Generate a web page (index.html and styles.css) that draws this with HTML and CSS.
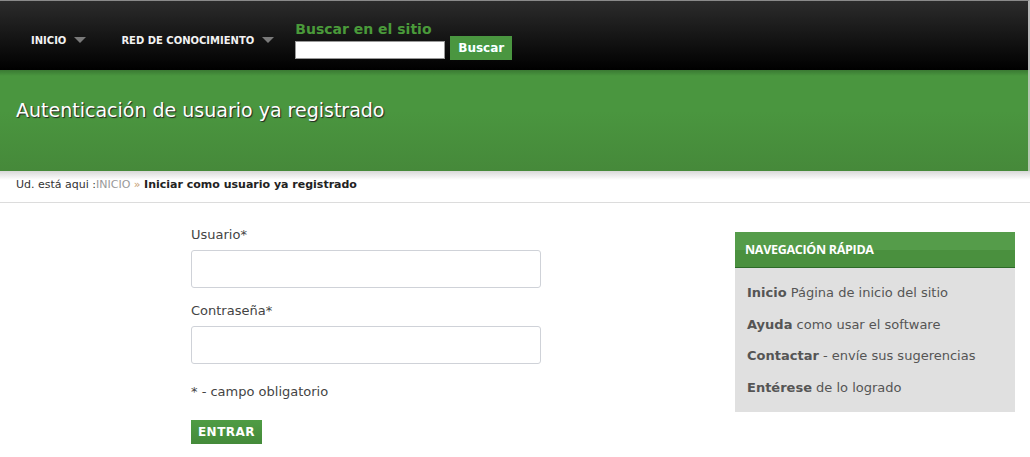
FILE: index.html
```html
<!DOCTYPE html>
<html lang="es">
<head>
<meta charset="utf-8">
<title>Autenticación de usuario ya registrado</title>
<link rel="stylesheet" href="styles.css">
</head>
<body>
<header class="topbar">
  <nav class="mainnav">
    <a class="navitem" href="#">INICIO <span class="caret"></span></a>
    <a class="navitem" href="#">RED DE CONOCIMIENTO <span class="caret"></span></a>
  </nav>
  <form class="search">
    <label class="search-title">Buscar en el sitio</label>
    <div class="search-row">
      <input class="search-input" type="text">
      <button class="search-btn" type="button">Buscar</button>
    </div>
  </form>
</header>
<section class="band">
  <h1 class="band-title">Autenticación de usuario ya registrado</h1>
</section>
<div class="band-shadow"></div>
<div class="crumbs">
  <span class="crumb-lead">Ud. está aqui :</span><a class="crumb-link" href="#">INICIO</a> <span class="crumb-sep">»</span> <strong class="crumb-cur">Iniciar como usuario ya registrado</strong>
</div>
<main class="main">
  <form class="login">
    <label class="field-label">Usuario*</label>
    <input class="field" type="text">
    <label class="field-label">Contraseña*</label>
    <input class="field" type="password">
    <p class="note">* - campo obligatorio</p>
    <button class="enter" type="button">ENTRAR</button>
  </form>
  <aside class="quick">
    <h2 class="quick-head">NAVEGACIÓN RÁPIDA</h2>
    <ul class="quick-list">
      <li><b>Inicio</b> Página de inicio del sitio</li>
      <li><b>Ayuda</b> como usar el software</li>
      <li><b>Contactar</b> - envíe sus sugerencias</li>
      <li><b>Entérese</b> de lo logrado</li>
    </ul>
  </aside>
</main>
</body>
</html>
```
FILE: styles.css
```css
html, body {
  margin: 0;
  padding: 0;
  background: #fff;
  font-family: "DejaVu Sans", Verdana, sans-serif;
}
.topbar {
  height: 70px;
  box-sizing: border-box;
  border-top: 1px solid #8a8a8a;
  border-right: 2px solid #b8b8b8;
  background: linear-gradient(#2c2c2c, #000);
  display: flex;
  align-items: flex-start;
}
.mainnav {
  display: flex;
  gap: 35px;
  padding-left: 31px;
  padding-top: 32px;
}
.navitem {
  color: #f2f2f2;
  text-decoration: none;
  font-size: 10px;
  font-weight: bold;
  letter-spacing: 0;
  display: flex;
  align-items: center;
  gap: 8px;
  height: 14px;
}
.caret {
  width: 0;
  height: 0;
  border-left: 6px solid transparent;
  border-right: 6px solid transparent;
  border-top: 6px solid #7a7a7a;
  margin-top: -1px;
}
.search {
  margin: 0 0 0 21px;
  padding-top: 20px;
}
.search-title {
  display: block;
  color: #4a9a3a;
  font-weight: bold;
  font-size: 14px;
  line-height: 16px;
}
.search-row {
  display: flex;
  align-items: center;
  gap: 5px;
  margin-top: -1px;
}
.search-input {
  width: 150px;
  height: 18px;
  box-sizing: border-box;
  border: 1px solid #999;
  background: #fff;
  margin: 4px 0 0;
  padding: 0;
}
.search-btn {
  background: #4a9640;
  color: #fff;
  border: 0;
  font-family: inherit;
  font-weight: bold;
  font-size: 12px;
  height: 24px;
  width: 62px;
  padding: 0;
  margin-top: 0;
  text-shadow: 0 0 1px #2a6;
}
.band {
  height: 101px;
  box-sizing: border-box;
  border-right: 2px solid #b8c8b4;
  background: linear-gradient(#3a7a33 0, #4a963f 6px, #4a963f 40%, #46893a 100%);
  padding: 29px 0 0 16px;
}
.band-title {
  margin: 0;
  color: #fff;
  font-weight: normal;
  font-size: 19px;
  line-height: 22px;
  text-shadow: 1px 1px 1px #222;
}
.band-shadow {
  height: 9px;
  background: linear-gradient(#d8d8d8, #fff);
}
.crumbs {
  padding: 0 0 0 16px;
  height: 22px;
  line-height: 10px;
  font-size: 11px;
  color: #333;
  border-bottom: 1px solid #dcdcdc;
}
.crumb-link {
  color: #999;
  text-decoration: none;
}
.crumb-sep {
  color: #c8a070;
}
.crumb-cur {
  color: #222;
}
.main {
  display: flex;
  align-items: flex-start;
  padding: 0 15px 0 191px;
}
.login {
  width: 350px;
  display: flex;
  flex-direction: column;
  align-items: flex-start;
  padding-top: 24px;
}
.field-label {
  font-size: 13px;
  color: #444;
  line-height: 16px;
}
.field {
  width: 350px;
  height: 38px;
  box-sizing: border-box;
  border: 1px solid #cfd2d8;
  border-radius: 3px;
  margin: 7px 0 15px;
  background: #fff;
}
.note {
  margin: 5px 0 0;
  font-size: 13px;
  color: #444;
  line-height: 16px;
}
.enter {
  margin-top: 20px;
  width: 71px;
  height: 24px;
  padding: 0;
  border: 0;
  background: linear-gradient(#4f9c44, #448a3a);
  color: #fff;
  font-family: inherit;
  font-weight: bold;
  font-size: 12px;
  letter-spacing: 0.5px;
}
.quick {
  margin-left: auto;
  width: 280px;
  margin-top: 29px;
  background: #e0e0e0;
}
.quick-head {
  margin: 0;
  height: 36px;
  box-sizing: border-box;
  border-bottom: 1px solid #2d6a28;
  background: linear-gradient(#559c4a 0, #559c4a 50%, #4a903e 50%, #4a903e 100%);
  color: #fff;
  font-family: "Open Sans", sans-serif;
  font-weight: 700;
  font-size: 12.5px;
  line-height: 35px;
  padding-left: 10px;
  letter-spacing: -0.3px;
}
.quick-list {
  list-style: none;
  margin: 0;
  padding: 17px 0 16px 12px;
}
.quick-list li {
  font-size: 13px;
  color: #555;
  line-height: 16px;
  margin-bottom: 15.5px;
}
.quick-list li:last-child {
  margin-bottom: 0;
}
.quick-list li b {
  color: #555;
}
```
